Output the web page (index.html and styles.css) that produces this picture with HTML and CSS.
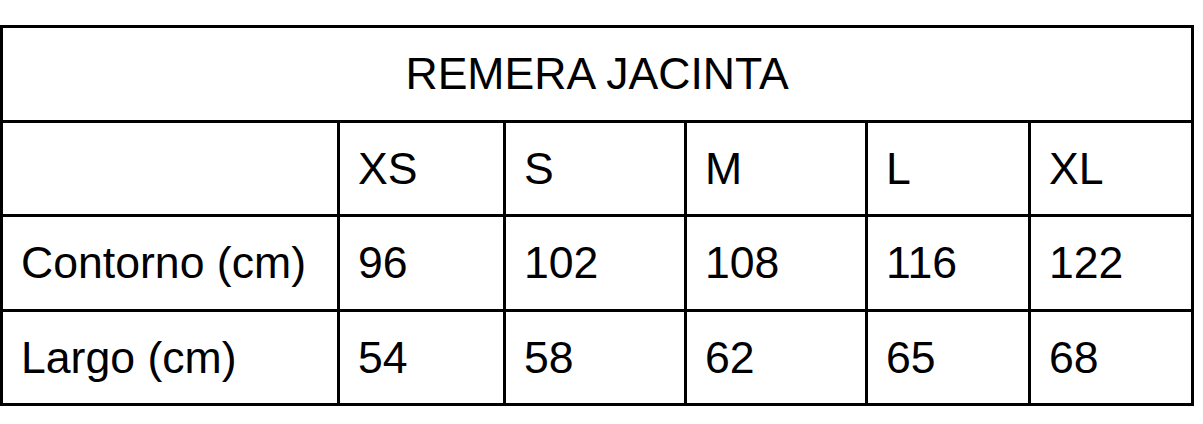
FILE: index.html
```html
<!DOCTYPE html>
<html lang="es">
<head>
<meta charset="utf-8">
<title>Remera Jacinta</title>
<link rel="stylesheet" href="styles.css">
</head>
<body>
<table class="size-table">
  <colgroup>
    <col class="c-label">
    <col class="c-xs">
    <col class="c-s">
    <col class="c-m">
    <col class="c-l">
    <col class="c-xl">
  </colgroup>
  <tr class="row-title">
    <td class="title" colspan="6">REMERA JACINTA</td>
  </tr>
  <tr class="row-b">
    <td></td>
    <td>XS</td>
    <td>S</td>
    <td>M</td>
    <td>L</td>
    <td>XL</td>
  </tr>
  <tr class="row-a">
    <td>Contorno (cm)</td>
    <td>96</td>
    <td>102</td>
    <td>108</td>
    <td>116</td>
    <td>122</td>
  </tr>
  <tr class="row-b">
    <td>Largo (cm)</td>
    <td>54</td>
    <td>58</td>
    <td>62</td>
    <td>65</td>
    <td>68</td>
  </tr>
</table>
</body>
</html>
```

FILE: styles.css
```css
html, body {
  margin: 0;
  background: #fff;
}

body {
  padding-top: 25px;
  font-family: "Liberation Sans", Arial, sans-serif;
  color: #000;
}

.size-table {
  table-layout: fixed;
  border-collapse: separate;
  border-spacing: 3px;
  background: #000;
  width: 1194px;
}

.c-label { width: 334px; }
.c-xs { width: 163px; }
.c-s { width: 178px; }
.c-m { width: 178px; }
.c-l { width: 160px; }
.c-xl { width: 160px; }

.size-table td {
  background: #fff;
  padding: 0 0 0 18px;
  font-size: 44.6px;
  line-height: normal;
  vertical-align: middle;
  text-align: left;
  white-space: nowrap;
}

.size-table td.title {
  padding: 0;
  text-align: center;
}

.row-title { height: 92px; }
.row-a { height: 92px; }
.row-b { height: 91px; }
```
